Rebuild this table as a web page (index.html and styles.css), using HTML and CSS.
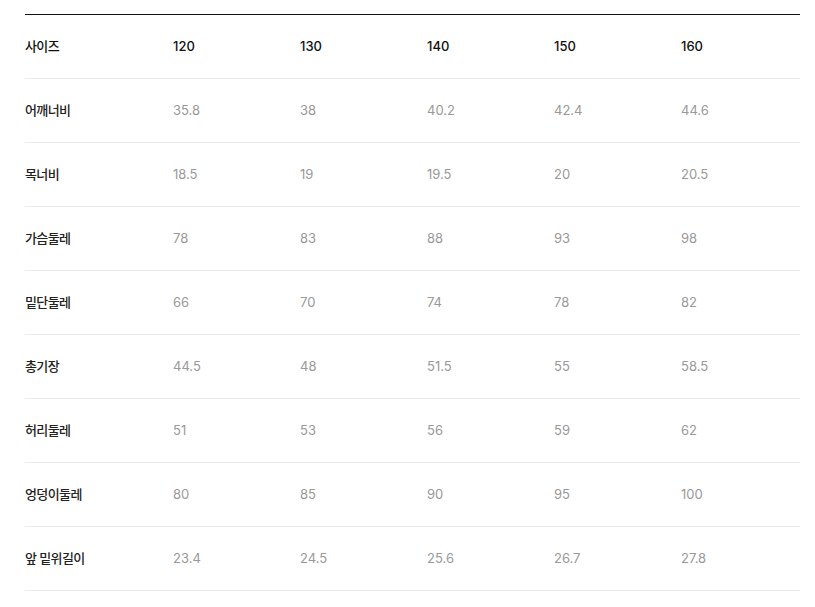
FILE: index.html
```html
<!DOCTYPE html>
<html lang="ko">
<head>
<meta charset="utf-8">
<link rel="stylesheet" href="styles.css">
</head>
<body>
<div class="table">
  <div class="row head"><div class="label">사이즈</div><div>120</div><div>130</div><div>140</div><div>150</div><div>160</div></div>
  <div class="row"><div class="label">어깨너비</div><div>35.8</div><div>38</div><div>40.2</div><div>42.4</div><div>44.6</div></div>
  <div class="row"><div class="label">목너비</div><div>18.5</div><div>19</div><div>19.5</div><div>20</div><div>20.5</div></div>
  <div class="row"><div class="label">가슴둘레</div><div>78</div><div>83</div><div>88</div><div>93</div><div>98</div></div>
  <div class="row"><div class="label">밑단둘레</div><div>66</div><div>70</div><div>74</div><div>78</div><div>82</div></div>
  <div class="row"><div class="label">총기장</div><div>44.5</div><div>48</div><div>51.5</div><div>55</div><div>58.5</div></div>
  <div class="row"><div class="label">허리둘레</div><div>51</div><div>53</div><div>56</div><div>59</div><div>62</div></div>
  <div class="row"><div class="label">엉덩이둘레</div><div>80</div><div>85</div><div>90</div><div>95</div><div>100</div></div>
  <div class="row"><div class="label">앞 밑위길이</div><div>23.4</div><div>24.5</div><div>25.6</div><div>26.7</div><div>27.8</div></div>
</div>
</body>
</html>
```
FILE: styles.css
```css
html, body { margin: 0; padding: 0; background: #fff; }
body {
  padding: 14px 15px 0 25px;
  font-family: Inter, "Noto Sans CJK KR", sans-serif;
  font-size: 13px;
}
.table { border-top: 1px solid #111; }
.row {
  display: grid;
  grid-template-columns: 148px 127px 127px 127px 127px 1fr;
  height: 61px;
  padding-bottom: 2px;
  align-items: center;
  border-bottom: 1px solid #ebebeb;
  color: #999;
}
.row .label { color: #222; font-weight: 500; letter-spacing: -0.6px; }
.row.head div { color: #111; font-weight: 500; }
```
